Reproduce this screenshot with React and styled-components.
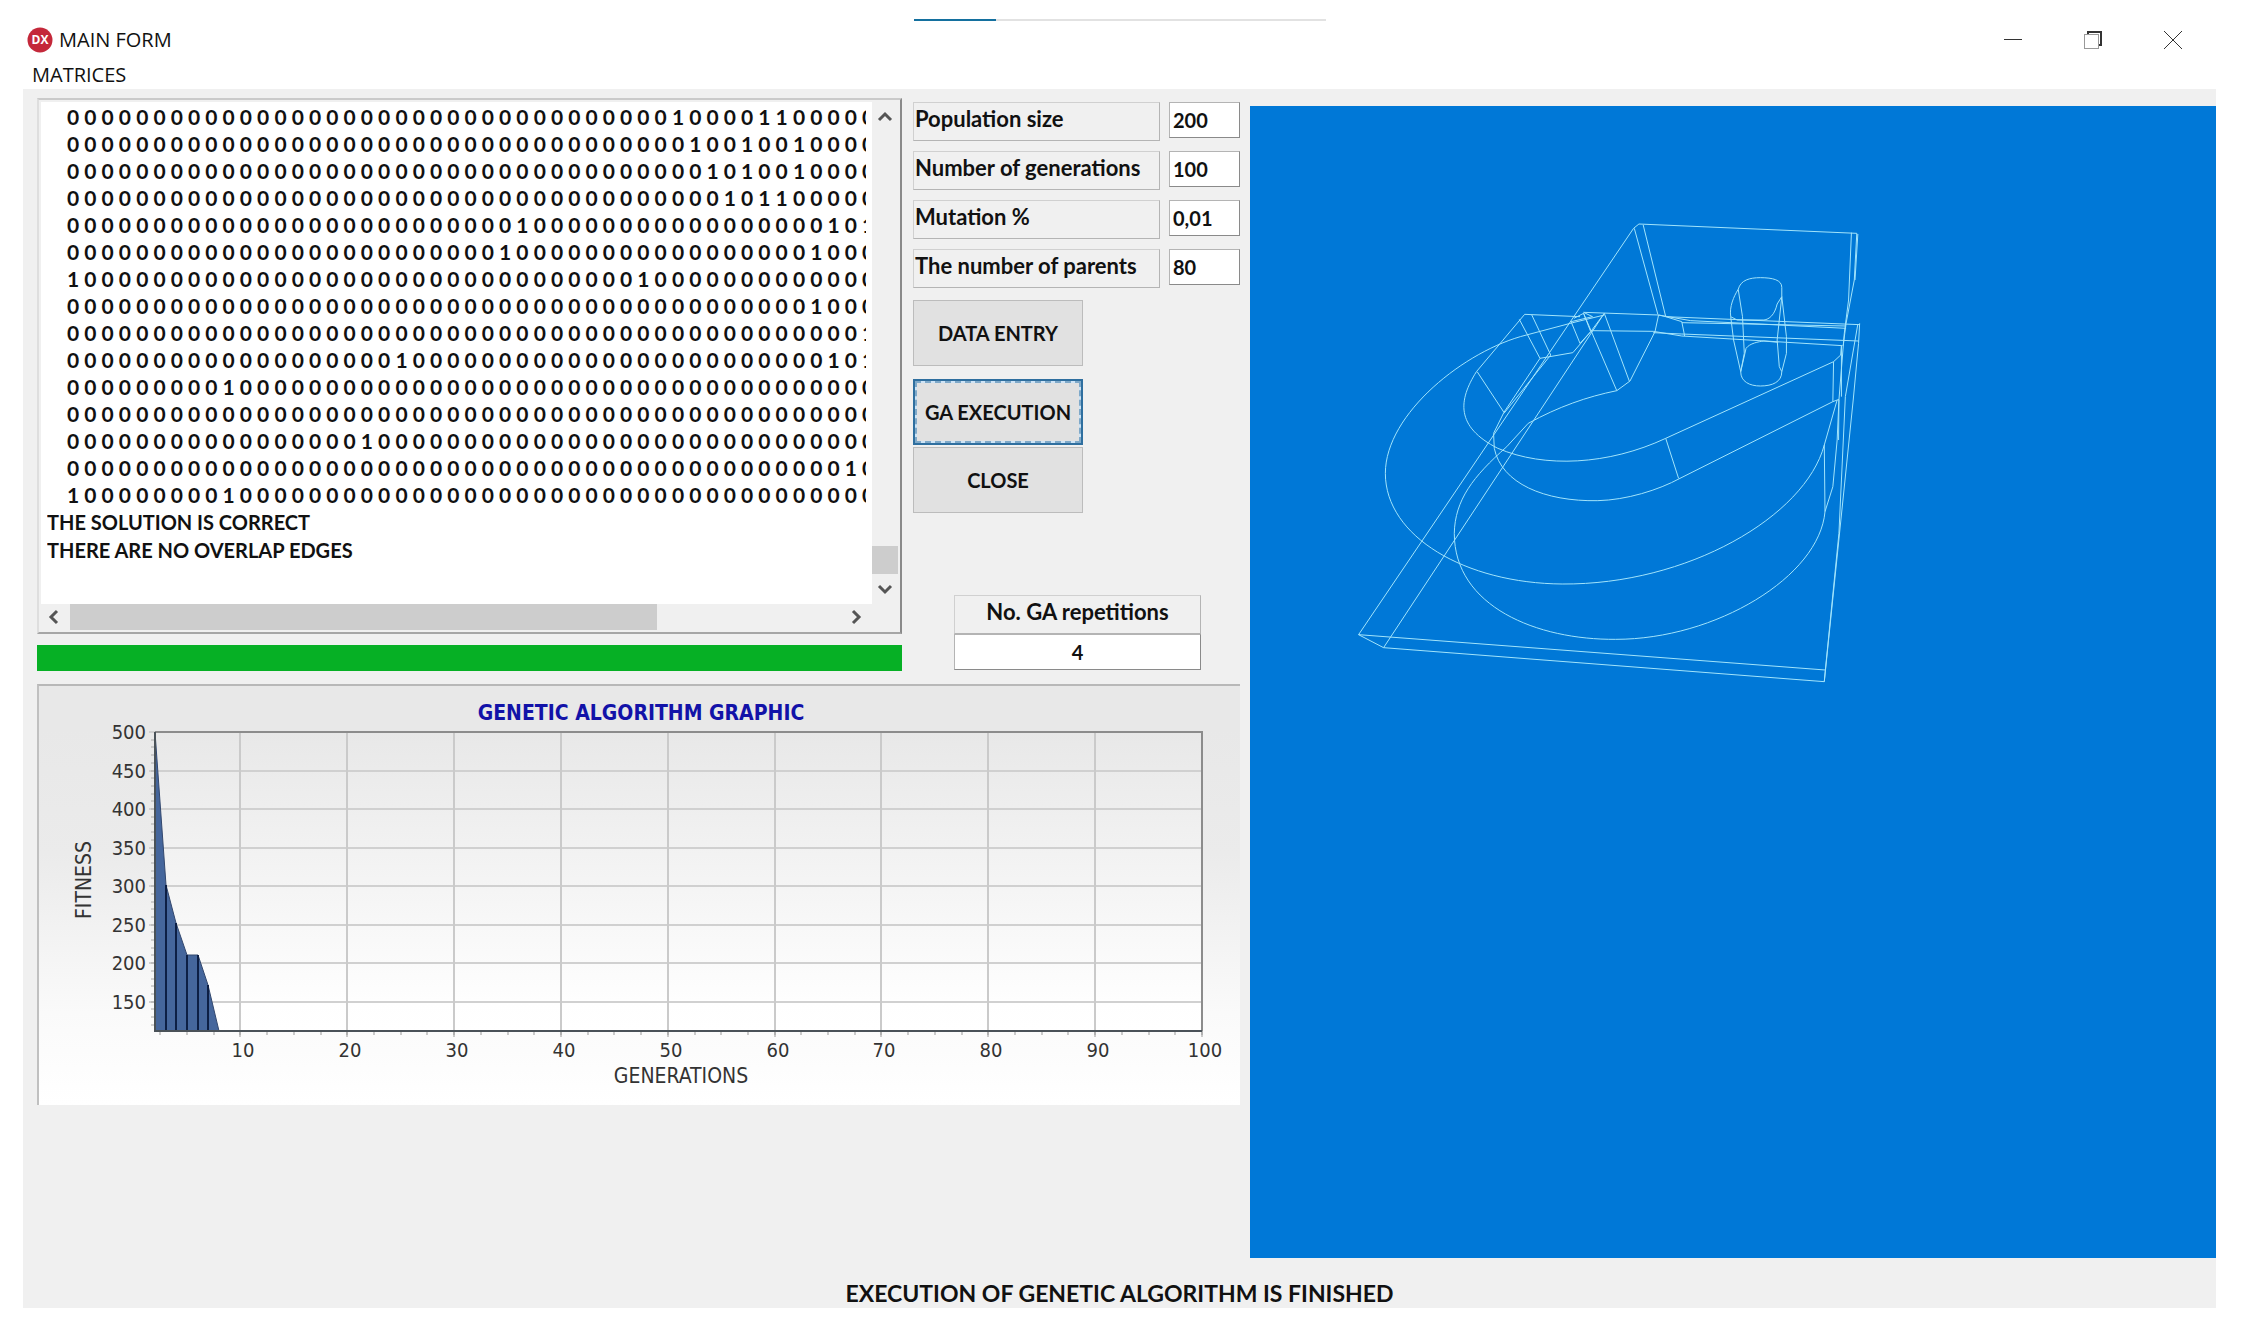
import React, { useState } from 'react';
import styled, { createGlobalStyle } from 'styled-components';

const GlobalStyle = createGlobalStyle`
  * {
    box-sizing: border-box;
  }

  body {
    margin: 0;
    background: #fff;
    color: #111;
    font-family: Lato, 'Liberation Sans', sans-serif;
  }
`;

const Window = styled.div`
  min-height: 100vh;
  display: flex;
  flex-direction: column;
  padding: 0 33px 21px 23px;
`;

const TitleBar = styled.header`
  display: grid;
  grid-template-columns: 1fr 412px 1fr;
  height: 61px;
  font-family: 'Open Sans', 'Noto Sans', sans-serif;
`;

const TitleGroup = styled.div`
  display: flex;
  align-items: center;
  gap: 6px;
  padding: 0 0 0 4px;
  height: 80px;
`;

const Title = styled.h1`
  margin: 0;
  font-size: 20px;
  font-weight: 400;
  line-height: 28px;
`;

const LoadingTrack = styled.div`
  margin-top: 19px;
  height: 2px;
  background: #e2e2e2;
`;

const LoadingBar = styled.div`
  width: 20%;
  height: 100%;
  background: #14709f;
`;

const WindowButtons = styled.div`
  display: flex;
  justify-content: flex-end;
  align-items: center;
  height: 80px;
  padding-right: 3px;
`;

const WindowButton = styled.button`
  width: 80px;
  height: 40px;
  padding: 0;
  border: none;
  background: transparent;
  color: #333;

  svg {
    display: block;
    margin: 0 auto;
  }
`;

const MenuBar = styled.nav`
  display: flex;
  height: 28px;
  padding: 0 9px;
  font-family: 'Open Sans', 'Noto Sans', sans-serif;
`;

const MenuItem = styled.button`
  padding: 0;
  border: none;
  background: transparent;
  color: #111;
  font-family: inherit;
  font-size: 20px;
  line-height: 28px;
`;

const Form = styled.main`
  flex: 1;
  display: flex;
  flex-direction: column;
  background: #f0f0f0;
`;

const Workspace = styled.div`
  flex: 1;
  display: grid;
  grid-template-columns: minmax(0, 1203fr) minmax(0, 966fr);
  gap: 10px;
  padding: 9px 0 0 14px;
`;

const LeftSide = styled.div`
  display: flex;
  flex-direction: column;
  gap: 13px;
`;

const TopRow = styled.div`
  display: flex;
  gap: 11px;
`;

const OutputColumn = styled.section`
  flex: 1;
  min-width: 0;
  display: flex;
  flex-direction: column;
  gap: 11px;
`;

const Memo = styled.div`
  display: grid;
  grid-template-columns: minmax(0, 1fr) 26px;
  grid-template-rows: auto 26px;
  padding: 2px;
  border: 2px solid;
  border-color: #cacaca #8a8a8a #a6a6a6 #dedede;
  background: #f0f0f0;
`;

const MemoPage = styled.div`
  padding: 1px 6px 40px;
  background: #fff;
`;

const MemoText = styled.div`
  overflow: hidden;
  font-weight: 700;
  white-space: pre;
`;

const MatrixRow = styled.div`
  padding-left: 20px;
  font-size: 21px;
  line-height: 27px;
`;

const Note = styled.div`
  font-size: 20px;
  line-height: 28px;
`;

const ScrollBar = styled.div`
  display: flex;
  flex-direction: ${props => (props.$vertical ? 'column' : 'row')};
  justify-content: space-between;
  background: #f0f0f0;
`;

const ScrollButton = styled.button`
  display: flex;
  align-items: center;
  justify-content: center;
  width: ${props => (props.$vertical ? '26px' : '29px')};
  height: ${props => (props.$vertical ? '30px' : '26px')};
  padding: ${props => (props.$vertical ? '0' : '0 3px 0 0')};
  border: none;
  background: transparent;
`;

const ScrollTrack = styled.div`
  flex: 1;
  display: flex;
  flex-direction: ${props => (props.$vertical ? 'column' : 'row')};
  justify-content: ${props => (props.$vertical ? 'flex-end' : 'flex-start')};
`;

const ScrollThumb = styled.div`
  ${props => (props.$vertical ? 'height: 28px;' : 'width: 76%;')}
  background: #cdcdcd;
`;

const Progress = styled.progress`
  appearance: none;
  display: block;
  width: 100%;
  height: 26px;
  border: none;
  background: #e6e6e6;

  &::-webkit-progress-bar {
    background: #e6e6e6;
  }

  &::-webkit-progress-value {
    background: #06b025;
  }
`;

const ControlColumn = styled.section`
  width: 327px;
  display: flex;
  flex-direction: column;
  padding-top: 4px;
`;

const Fields = styled.div`
  display: flex;
  flex-direction: column;
  gap: 10px;
`;

const FieldRow = styled.div`
  display: grid;
  grid-template-columns: 1fr 71px;
  gap: 9px;
  align-items: start;
`;

const FieldLabel = styled.label`
  height: 39px;
  padding: 0 1px;
  border: 1px solid;
  border-color: #d0d0d0 #b4b4b4 #b4b4b4 #d0d0d0;
  font-size: 22px;
  font-weight: 700;
  line-height: 32px;
  text-align: ${props => (props.$center ? 'center' : 'left')};
  white-space: nowrap;
`;

const FieldInput = styled.input`
  width: 100%;
  height: 36px;
  padding: 0 3px;
  border: 1px solid;
  border-color: #b4b4b4 #8a8a8a #8a8a8a #b4b4b4;
  border-radius: 0;
  background: #fff;
  color: #111;
  font-family: inherit;
  font-size: 20px;
  font-weight: 700;
  text-align: ${props => (props.$center ? 'center' : 'left')};
`;

const Buttons = styled.div`
  display: flex;
  flex-direction: column;
  align-items: flex-start;
  gap: 2px;
  padding-top: 12px;
`;

const FormButton = styled.button`
  width: 170px;
  height: 66px;
  padding: 0;
  border: 1px solid #bcbcbc;
  background: #e1e1e1;
  color: #111;
  font-family: inherit;
  font-size: 20px;
  font-weight: 700;
  white-space: nowrap;
`;

const FocusedButton = styled(FormButton)`
  margin-top: 11px;
  border: 2px solid #2f6f9f;
  outline: 2px dashed #7fa9c9;
  outline-offset: -4px;
  box-shadow: inset 0 0 0 2px #cfe4f5;
`;

const Repetitions = styled.div`
  display: flex;
  flex-direction: column;
  margin: auto 39px 1px 41px;
`;

const ChartPanel = styled.section`
  border-top: 2px solid #b8b8b8;
  border-left: 2px solid #c0c0c0;
  background: linear-gradient(#e8e8e8 10%, #ebebeb 40%, #fafafa 78%, #fff);

  svg {
    display: block;
    width: 100%;
    height: auto;
  }
`;

const ChartText = styled.text`
  font-family: 'DejaVu Sans Condensed', 'DejaVu Sans', sans-serif;
  font-size: ${props => (props.$large ? '21px' : '20px')};
  font-weight: ${props => (props.$bold ? 700 : 400)};
  fill: ${props => (props.$bold ? '#1212a8' : '#333')};
  text-anchor: ${props => props.$anchor || 'middle'};
`;

const Viewport = styled.section`
  margin-top: 8px;
  padding: 94px 80px;
  background: #0078d7;
  overflow: hidden;

  svg {
    display: block;
    width: 560px;
    max-width: 100%;
    height: 500px;
  }
`;

const StatusBar = styled.footer`
  padding: 21px 0 0;
  font-size: 23px;
  font-weight: 700;
  line-height: 29px;
  text-align: center;
`;

const COLUMNS = 47;

// column numbers that hold a one, row by row
const MATRIX = [
  [35, 40, 41],
  [36, 39, 42],
  [37, 39, 42],
  [38, 40, 41],
  [26, 44, 46],
  [25, 43],
  [0, 33],
  [43],
  [46],
  [19, 44, 46],
  [9],
  [],
  [17],
  [45],
  [0, 9],
];

const rowText = ones =>
  Array.from({ length: COLUMNS }, (_, i) => (ones.includes(i) ? '1' : '0')).join(' ');

const FIELDS = [
  { id: 'population', label: 'Population size', value: '200' },
  { id: 'generations', label: 'Number of generations', value: '100' },
  { id: 'mutation', label: 'Mutation %', value: '0,01' },
  { id: 'parents', label: 'The number of parents', value: '80' },
];

const FITNESS = [
  [2, 500],
  [3, 302],
  [4, 252],
  [5, 210],
  [6, 210],
  [7, 172],
  [8, 112],
];

const PLOT = { left: 116, right: 1163, top: 46, bottom: 345 };
const px = generation =>
  Math.round(PLOT.left + ((generation - 2) * (PLOT.right - PLOT.left)) / 98);
const py = fitness =>
  Math.round(PLOT.top + ((500 - fitness) * (PLOT.bottom - PLOT.top)) / 388);

const WIRES = [
  // base plate
  'M80 1304L850 85L865 72L1475 100',
  'M80 1304L150 1343L768 340',
  'M80 1304L1387 1410L1384 1445L150 1343',
  'M1384 1445L1465 600L1480 430L1483 370',
  'M1387 1410L1425 1000L1443 590L1478 372',
  'M1475 100L1468 240L1445 370L1437 437',
  'M1460 98L1452 300L1440 400L1425 600L1424 720',
  'M1478 102L1470 240',
  'M852 85L918 343',
  'M877 75L940 350',
  // clamp
  'M700 350L545 343L410 515C360 600 350 680 470 745C600 805 780 795 940 715L1410 485L1430 465L1432 437V590',
  'M530 358L588 475L680 458L730 395',
  'M565 345L618 465L487 640',
  'M412 515L487 637L458 700L460 745C480 850 600 905 750 902C830 900 920 870 980 835L1408 605L1425 598',
  'M588 475L487 637',
  'M940 715L976 835',
  'M1410 485L1408 605',
  // ring
  'M710 340L803 572L840 543L910 395L920 345',
  'M768 340L838 543',
  'M803 572C720 590 640 620 555 670L495 740C400 830 350 900 348 1000C348 1220 580 1320 800 1318C1080 1318 1370 1130 1386 935L1384 735',
  'M1386 935L1408 860L1420 720L1425 600',
  'M1420 600L1384 735C1330 950 1000 1155 650 1152C380 1150 155 1010 155 820C155 640 380 450 550 405L680 368L768 345',
  // upper edge
  'M710 337L920 345L940 350L1483 374',
  'M920 345L1010 362L1445 385',
  'M985 368L1445 378',
  'M730 392L905 394L985 408L1435 437',
  'M905 398L985 402L1480 423',
  'M940 350L985 365L993 408',
  'M683 355L710 340L730 395L700 430L675 365L735 350L710 337',
  'M730 395L768 340',
  // slot
  'M1143 268C1150 240 1175 233 1205 233C1240 233 1265 240 1265 262V290L1252 312C1245 345 1230 358 1215 360H1140L1122 350C1118 320 1130 290 1143 268Z',
  'M1143 268L1155 350L1160 460L1150 515',
  'M1122 350L1130 420L1150 515C1150 545 1175 558 1205 558C1240 558 1265 545 1265 515L1278 460V410L1265 290L1252 420L1258 500L1265 515',
  'M1150 515L1165 445C1175 430 1200 425 1215 423L1255 427',
];

function Arrow({ d }) {
  return (
    <svg width="16" height="16" viewBox="0 0 16 16" fill="none" stroke="#555" strokeWidth="3">
      <path d={d} />
    </svg>
  );
}

function OutputMemo() {
  return (
    <Memo>
      <MemoPage>
        <MemoText>
          {MATRIX.map((ones, index) => (
            <MatrixRow key={index}>{rowText(ones)}</MatrixRow>
          ))}
          <Note>THE SOLUTION IS CORRECT</Note>
          <Note>THERE ARE NO OVERLAP EDGES</Note>
        </MemoText>
      </MemoPage>
      <ScrollBar $vertical>
        <ScrollButton $vertical aria-label="Scroll up">
          <Arrow d="M2 11L8 5L14 11" />
        </ScrollButton>
        <ScrollTrack $vertical>
          <ScrollThumb $vertical />
        </ScrollTrack>
        <ScrollButton $vertical aria-label="Scroll down">
          <Arrow d="M2 5L8 11L14 5" />
        </ScrollButton>
      </ScrollBar>
      <ScrollBar>
        <ScrollButton aria-label="Scroll left">
          <Arrow d="M11 2L5 8L11 14" />
        </ScrollButton>
        <ScrollTrack>
          <ScrollThumb />
        </ScrollTrack>
        <ScrollButton aria-label="Scroll right">
          <Arrow d="M5 2L11 8L5 14" />
        </ScrollButton>
      </ScrollBar>
    </Memo>
  );
}

function FitnessChart() {
  const xTicks = [10, 20, 30, 40, 50, 60, 70, 80, 90, 100];
  const yTicks = [500, 450, 400, 350, 300, 250, 200, 150];
  const area = FITNESS.map(([g, f]) => `${px(g)},${py(f)}`).join(' ');

  return (
    <ChartPanel>
      <svg viewBox="0 0 1201 419" role="img" aria-label="Genetic algorithm graphic">
        <defs>
          <linearGradient id="wall" x1="0" y1="0" x2="0" y2="1">
            <stop offset="0" stopColor="#e8e8e8" />
            <stop offset="0.9" stopColor="#fefefe" />
            <stop offset="1" stopColor="#fff" />
          </linearGradient>
        </defs>
        <ChartText $bold $large x="602" y="34">GENETIC ALGORITHM GRAPHIC</ChartText>
        <rect
          x={PLOT.left}
          y={PLOT.top}
          width={PLOT.right - PLOT.left}
          height={PLOT.bottom - PLOT.top}
          fill="url(#wall)"
        />
        {yTicks.map(tick => (
          <g key={tick}>
            <path d={`M${PLOT.left - 6} ${py(tick)}H${PLOT.right}`} stroke="#d0d0d0" strokeWidth="2" />
            <ChartText $anchor="end" x="107" y={py(tick) + 7}>{tick}</ChartText>
          </g>
        ))}
        {xTicks.map(tick => (
          <g key={tick}>
            <path d={`M${px(tick)} ${PLOT.top}V${PLOT.bottom + 6}`} stroke="#cacaca" strokeWidth="2" />
            <ChartText x={px(tick) + 3} y="371">{tick}</ChartText>
          </g>
        ))}
        {Array.from({ length: 40 }, (_, i) => 2.5 * (i + 1)).map(tick => (
          <path key={tick} d={`M${px(tick)} ${PLOT.bottom}v4`} stroke="#999" />
        ))}
        {Array.from({ length: 38 }, (_, i) => 120 + 10 * i).map(tick => (
          <path key={tick} d={`M${PLOT.left} ${py(tick)}h-4`} stroke="#aaa" />
        ))}
        <polygon
          points={`${area} ${px(2)},${PLOT.bottom}`}
          fill="#45669c"
          stroke="#33486e"
        />
        {FITNESS.slice(1, -1).map(([g, f]) => (
          <path key={g} d={`M${px(g)} ${py(f)}V${PLOT.bottom}`} stroke="#0d1f45" strokeWidth="2" />
        ))}
        <path
          d={`M${PLOT.left} ${PLOT.top}H${PLOT.right}V${PLOT.bottom}`}
          fill="none"
          stroke="#8c8c8c"
          strokeWidth="2"
        />
        <path
          d={`M${PLOT.left} ${PLOT.top}V${PLOT.bottom}H${PLOT.right}`}
          fill="none"
          stroke="#4a5258"
          strokeWidth="2"
        />
        <ChartText $large x="642" y="397">GENERATIONS</ChartText>
        <ChartText $large transform="translate(52 194) rotate(-90)">FITNESS</ChartText>
      </svg>
    </ChartPanel>
  );
}

function Model() {
  return (
    <Viewport>
      <svg viewBox="0 0 1568 1500" preserveAspectRatio="none" fill="none" stroke="#a2e4fb">
        {WIRES.map(d => (
          <path key={d} d={d} vectorEffect="non-scaling-stroke" />
        ))}
      </svg>
    </Viewport>
  );
}

function App() {
  const [values, setValues] = useState(
    Object.fromEntries(FIELDS.map(field => [field.id, field.value]))
  );
  const [repetitions, setRepetitions] = useState('4');

  return (
    <Window>
      <GlobalStyle />
      <TitleBar>
        <TitleGroup>
          <svg width="26" height="26" viewBox="0 0 26 26">
            <circle cx="13" cy="13" r="12.5" fill="#c4283a" />
            <text
              x="13"
              y="17"
              fill="#fff"
              fontSize="12"
              fontWeight="700"
              textAnchor="middle"
            >
              DX
            </text>
          </svg>
          <Title>MAIN FORM</Title>
        </TitleGroup>
        <LoadingTrack>
          <LoadingBar />
        </LoadingTrack>
        <WindowButtons>
          <WindowButton aria-label="Minimize">
            <svg width="18" height="18" viewBox="0 0 18 18" stroke="currentColor">
              <path d="M0 8.5H18" />
            </svg>
          </WindowButton>
          <WindowButton aria-label="Restore">
            <svg width="18" height="18" viewBox="0 0 18 18" fill="none" stroke="currentColor">
              <path d="M4 3V1H17V14H15" strokeWidth="2" />
              <rect x="0.5" y="3.5" width="14" height="14" stroke="#999" />
            </svg>
          </WindowButton>
          <WindowButton aria-label="Close">
            <svg width="18" height="18" viewBox="0 0 18 18" stroke="currentColor">
              <path d="M0 0L18 18M18 0L0 18" />
            </svg>
          </WindowButton>
        </WindowButtons>
      </TitleBar>
      <MenuBar>
        <MenuItem>MATRICES</MenuItem>
      </MenuBar>
      <Form>
        <Workspace>
          <LeftSide>
            <TopRow>
              <OutputColumn>
                <OutputMemo />
                <Progress value="100" max="100" aria-label="Progress" />
              </OutputColumn>
              <ControlColumn>
                <Fields>
                  {FIELDS.map(field => (
                    <FieldRow key={field.id}>
                      <FieldLabel htmlFor={field.id}>{field.label}</FieldLabel>
                      <FieldInput
                        id={field.id}
                        type="text"
                        value={values[field.id]}
                        onChange={(e) => setValues({ ...values, [field.id]: e.target.value })}
                      />
                    </FieldRow>
                  ))}
                </Fields>
                <Buttons>
                  <FormButton type="button">DATA ENTRY</FormButton>
                  <FocusedButton type="button">GA EXECUTION</FocusedButton>
                  <FormButton type="button">CLOSE</FormButton>
                </Buttons>
                <Repetitions>
                  <FieldLabel $center htmlFor="repetitions">No. GA repetitions</FieldLabel>
                  <FieldInput
                    $center
                    id="repetitions"
                    type="text"
                    value={repetitions}
                    onChange={(e) => setRepetitions(e.target.value)}
                  />
                </Repetitions>
              </ControlColumn>
            </TopRow>
            <FitnessChart />
          </LeftSide>
          <Model />
        </Workspace>
        <StatusBar>EXECUTION OF GENETIC ALGORITHM IS FINISHED</StatusBar>
      </Form>
    </Window>
  );
}

export default App;
